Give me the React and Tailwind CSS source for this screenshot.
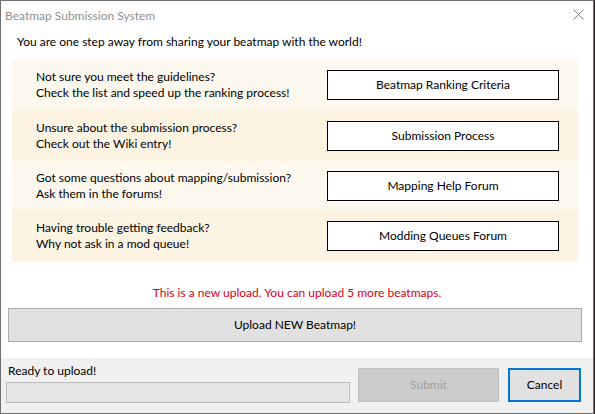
export default function App() {
  const rows = [
    { l1: 'Not sure you meet the guidelines?', l2: 'Check the list and speed up the ranking process!', btn: 'Beatmap Ranking Criteria', cls: 'h-[50px] bg-[#fdf8ee]' },
    { l1: 'Unsure about the submission process?', l2: 'Check out the Wiki entry!', btn: 'Submission Process', cls: 'h-[51px] bg-[#fcf3e3]' },
    { l1: 'Got some questions about mapping/submission?', l2: 'Ask them in the forums!', btn: 'Mapping Help Forum', cls: 'h-[49px] bg-[#fdf8ee]' },
    { l1: 'Having trouble getting feedback?', l2: 'Why not ask in a mod queue!', btn: 'Modding Queues Forum', cls: 'h-[52px] bg-[#fcf3e3]' },
  ]

  return (
    <div className="w-[595px] h-[414px] bg-[#2a2626] font-['Segoe_UI','Lato','Noto_Sans',sans-serif] text-[12px] text-black">
      <div className="w-[594px] h-[414px] flex flex-col bg-white border border-[#707070]">
        {/* Title bar */}
        <div className="h-[29px] flex items-center justify-between pl-[4px] pr-[9px]">
          <span className="text-[#8f8f8f] text-[12px]">Beatmap Submission System</span>
          <svg width="11" height="11" viewBox="0 0 11 11" className="mt-[-3px]">
            <path d="M0.5 0.5 L10.5 10.5 M10.5 0.5 L0.5 10.5" stroke="#808080" strokeWidth="1" />
          </svg>
        </div>

        {/* Content */}
        <div className="flex-1 flex flex-col">
          <div className="pl-[16px] h-[30px] leading-[24px]">You are one step away from sharing your beatmap with the world!</div>

          <div className="ml-[11px] w-[566px] flex flex-col">
            {rows.map((r, i) => (
              <div key={i} className={`flex items-center justify-between pl-[24px] pr-[19px] ${r.cls}`}>
                <div className="leading-[16px]">
                  <div>{r.l1}</div>
                  <div>{r.l2}</div>
                </div>
                <div className="w-[232px] h-[30px] bg-white border border-black flex items-center justify-center">
                  {r.btn}
                </div>
              </div>
            ))}
          </div>

          <div className="h-[46px] pt-[23px] leading-[16px] text-center text-[#d4001a]">
            This is a new upload. You can upload 5 more beatmaps.
          </div>

          <div className="ml-[7px] w-[574px] h-[34px] bg-[#e1e1e1] border border-[#adadad] flex items-center justify-center">
            Upload NEW Beatmap!
          </div>
        </div>

        {/* Status area */}
        <div className="h-[55px] mt-[16px] bg-[#f0f0f0] flex pl-[5px]">
          <div className="w-[344px] flex flex-col pt-[5px]">
            <div className="leading-[16px] pl-[2px]">Ready to upload!</div>
            <div className="mt-[3px] h-[21px] bg-[#e6e6e6] border border-[#bcbcbc]" />
          </div>
          <div className="ml-[8px] mt-[10px] w-[141px] h-[34px] bg-[#cccccc] border border-[#bfbfbf] text-[#a0a0a0] flex items-center justify-center">
            Submit
          </div>
          <div className="ml-[9px] mt-[10px] w-[73px] h-[34px] bg-[#e1e1e1] border-2 border-[#0078d7] flex items-center justify-center">
            Cancel
          </div>
        </div>
      </div>
    </div>
  )
}
